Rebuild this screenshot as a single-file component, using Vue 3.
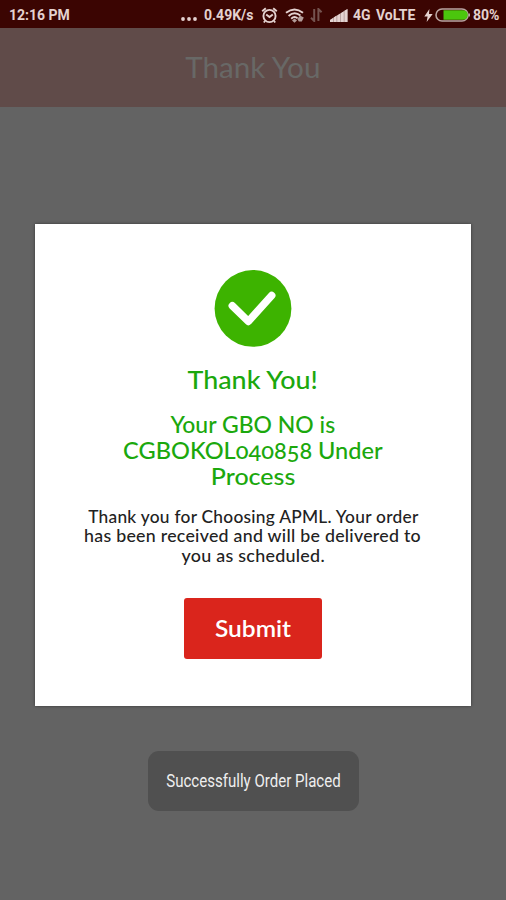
<script setup>
const order = [
  { text: 'Your GBO NO is', stretch: 1.02 },
  { text: 'CGBOKOL040858 Under', stretch: 1.048 },
  { text: 'Process', stretch: 1.11 },
]

const message = [
  { text: 'Thank you for Choosing APML. Your order', stretch: 1.05 },
  { text: 'has been received and will be delivered to', stretch: 1.076 },
  { text: 'you as scheduled.', stretch: 1.085 },
]
</script>

<template>
  <main class="screen">
    <div class="status">
      <span class="status__time">12:16 PM</span>
      <svg class="status__dots" width="16" height="4" viewBox="0 0 16 4">
        <circle cx="2" cy="2" r="1.9" />
        <circle cx="8" cy="2" r="1.9" />
        <circle cx="14" cy="2" r="1.9" />
      </svg>
      <span class="status__speed">0.49K/s</span>
      <svg class="status__alarm" width="17" height="17" viewBox="0 0 17 17">
        <circle cx="8.5" cy="9" r="6.1" />
        <path d="M1.2 4.3 4.8 1.3M15.8 4.3 12.2 1.3M5.2 7.4 8.5 10 11.8 7.4M4 14 2.8 15.5M13 14l1.2 1.5" />
      </svg>
      <svg class="status__wifi" width="20" height="15" viewBox="0 0 20 15">
        <path d="M1 4.8Q9.5-2 18 4.8M3.6 8Q9.5 2.8 15.4 7.6M6.2 10.8Q9.5 7.6 12.6 10.4" />
        <path class="solid" d="m9.5 10.4 2.5 2-2.5 2.3L7 12.4zM15 7.5l3.8 2-2 4h-3l-1.4-2.5z" />
      </svg>
      <svg class="status__data" width="13" height="14" viewBox="0 0 13 14">
        <path d="M4.2 1v12L1 9.8M8.4 13V1l3.2 3.2" />
      </svg>
      <svg class="status__signal" width="18" height="13" viewBox="0 0 18 13">
        <path class="wedge" d="M0 13v-2L17.5 0v13z" />
        <path d="M0 13v-2l3-2v4zM3.6 13V8.6l3-2V13zM7.2 13V6.4l3-2V13zM10.8 13V4.2l3-2V13zM14.4 13V1.8L17.5 0v13z" />
      </svg>
      <span class="status__network">4G</span>
      <span class="status__volte">VoLTE</span>
      <svg class="status__bolt" width="9" height="13" viewBox="0 0 9 14">
        <path d="M5.5 0 0 8h3.5L2.5 14 9 5.5H5z" />
      </svg>
      <svg class="status__battery" width="35" height="14" viewBox="0 0 35 14">
        <rect class="shell" x="1" y="1" width="32" height="12" rx="6" />
        <path class="charge" d="M8.5 2.2H28a4.8 4.8 0 0 1 0 9.6H8.5z" />
        <path class="shell" d="M34.2 5.5v3" />
      </svg>
      <span class="status__percent">80%</span>
    </div>

    <header class="header"><span>Thank You</span></header>

    <section class="dialog">
      <svg class="dialog__check" width="78" height="79" viewBox="0 0 78 79">
        <circle cx="39" cy="39.4" r="38.4" />
        <path d="M18.3 36.8 34.3 52.4 57.7 26.6" />
      </svg>
      <h1 class="dialog__title"><span>Thank You!</span></h1>
      <p class="dialog__order">
        <span v-for="line in order" :key="line.text" :style="{ transform: `scaleX(${line.stretch})` }">{{ line.text }}</span>
      </p>
      <p class="dialog__message">
        <span v-for="line in message" :key="line.text" :style="{ transform: `scaleX(${line.stretch})` }">{{ line.text }}</span>
      </p>
      <button class="dialog__submit" type="button"><span>Submit</span></button>
    </section>

    <div class="toast"><span>Successfully Order Placed</span></div>
  </main>
</template>

<style>
body {
  background: #636363;
}
</style>

<style scoped>
.screen {
  display: flex;
  flex-direction: column;
  align-items: center;
  width: 506px;
  height: 900px;
  overflow: hidden;
  font-family: Lato, sans-serif;
  background: #636363;
}

.status {
  display: flex;
  align-items: center;
  box-sizing: border-box;
  width: 100%;
  height: 28px;
  padding: 2px 0 0 9px;
  font: 700 14px/20px Roboto, sans-serif;
  color: #e4d2d0;
  white-space: nowrap;
  background: #3b0502;
}

.status span,
.status svg {
  flex: none;
}

.status svg {
  fill: #e4d2d0;
}

.status__time {
  width: 172px;
}

.status__dots {
  margin: 7px 7px 0 0;
}

.status__speed {
  width: 57px;
}

.status__alarm,
.status__wifi {
  stroke: #e4d2d0;
  stroke-width: 1.9;
}

.status .status__alarm,
.status .status__wifi {
  fill: none;
}

.status__wifi {
  margin-left: 7px;
}

.status__wifi .solid {
  fill: #b39d9a;
  stroke: none;
}

.status .status__data {
  margin-left: 5px;
  fill: none;
  stroke: #74534f;
  stroke-width: 2;
}

.status__signal {
  margin-left: 7px;
}

.status__signal .wedge {
  fill: #9c8280;
}

.status__network {
  width: 23px;
  margin-left: 5px;
}

.status__volte {
  width: 48px;
}

.status__battery {
  margin-left: 2px;
}

.status .shell {
  fill: none;
  stroke: #b9a5a2;
  stroke-width: 1.6;
}

.status .charge {
  fill: #4bc60d;
}

.status__percent {
  margin-left: 3px;
}

.header {
  display: flex;
  justify-content: center;
  width: 100%;
  height: 79px;
  font-size: 28px;
  font-weight: 400;
  line-height: 79px;
  color: #686866;
  background: #604b49;
}

.header span {
  transform: scaleX(1.06);
}

.dialog {
  display: flex;
  flex-direction: column;
  align-items: center;
  box-sizing: border-box;
  width: 436px;
  height: 482px;
  padding-top: 45px;
  margin-top: 116.5px;
  background: #ffffff;
  box-shadow: 0 0 3px rgba(0, 0, 0, 0.45);
}

.dialog__check {
  flex: none;
  fill: #3db300;
}

.dialog__check path {
  fill: none;
  stroke: #ffffff;
  stroke-width: 7.5;
  stroke-linecap: round;
  stroke-linejoin: round;
}

.dialog__title {
  margin: 15px 0 0;
  font-size: 25px;
  font-weight: 500;
  line-height: 32px;
  color: #1ba80d;
}

.dialog__title span {
  display: block;
  transform: scaleX(1.075);
}

.dialog__order {
  display: flex;
  flex-direction: column;
  align-items: center;
  margin: 17px 0 0;
  font-size: 22.5px;
  font-weight: 500;
  font-variant-numeric: oldstyle-nums;
  line-height: 26.4px;
  color: #1ba80d;
}

.dialog__message {
  display: flex;
  flex-direction: column;
  align-items: center;
  margin: 17px 0 0;
  font-size: 16.5px;
  font-weight: 500;
  line-height: 19.7px;
  color: #222222;
  letter-spacing: 0.25px;
}

.dialog__submit {
  width: 138px;
  height: 61px;
  padding: 0;
  margin-top: 31px;
  font: 600 22.5px/61px Lato, sans-serif;
  color: #ffffff;
  background: #da251c;
  border: 0;
  border-radius: 3px;
}

.dialog__submit span {
  display: block;
  transform: scaleX(1.09);
}

.toast {
  display: flex;
  justify-content: center;
  width: 211px;
  height: 60px;
  margin-top: 45px;
  font: 400 17.5px/61px Roboto, sans-serif;
  color: #eeeeee;
  white-space: nowrap;
  background: #505050;
  border-radius: 11px;
}

.toast span {
  flex: none;
  transform: scaleX(0.86);
}
</style>
